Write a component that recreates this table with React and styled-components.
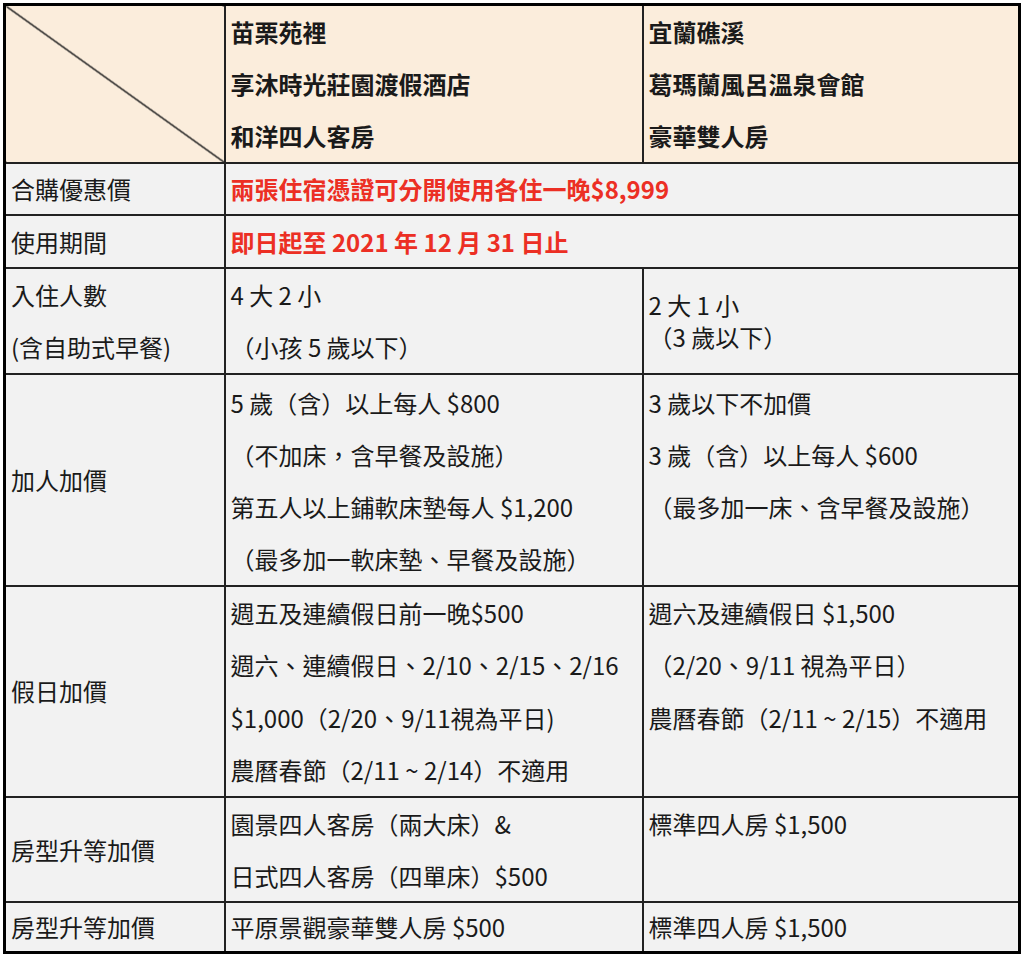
import React from 'react';
import styled, { createGlobalStyle } from 'styled-components';

const GlobalStyle = createGlobalStyle`
  body {
    margin: 0;
    background: #fff;
    font-family: "Noto Sans CJK TC", "Noto Sans", sans-serif;
  }
`;

const Page = styled.div`
  padding: 3px;
`;

const Table = styled.table`
  width: 1018px;
  table-layout: fixed;
  border-collapse: collapse;
  border: 3px solid #000;
  font-size: 24px;
  color: #1a1a1a;
`;

const Row = styled.tr`
  height: ${(p) => p.$h}px;
`;

const Cell = styled.td`
  border: 2px solid #222;
  padding: ${(p) => p.$pad || 0}px 4px 0 5px;
  vertical-align: ${(p) => (p.$top ? 'top' : 'middle')};
  background: ${(p) => (p.$head ? '#fbeddc' : '#f2f2f2')};
  font-weight: ${(p) => (p.$bold ? 700 : 400)};
  color: ${(p) => (p.$red ? '#ec2f24' : 'inherit')};
  line-height: ${(p) => p.$lh || 52}px;
  white-space: nowrap;
`;

const DiagonalCell = styled.td`
  border: 2px solid #222;
  padding: 0;
  background:
    linear-gradient(to top right, transparent calc(50% - 1px), #222 calc(50% - 0.5px), #222 calc(50% + 0.5px), transparent calc(50% + 1px)),
    #fbeddc;
`;

const Line = styled.div``;

const Lines = ({ items }) => items.map((t, i) => <Line key={i}>{t}</Line>);

const rows = [
  {
    h: 104,
    lh: 52,
    label: ['入住人數', '(含自助式早餐)'],
    a: ['4 大 2 小', '（小孩 5 歲以下）'],
    b: ['2 大 1 小', '（3 歲以下）'],
    bCenter: true,
  },
  {
    h: 210,
    pad: 2,
    label: ['加人加價'],
    a: ['5 歲（含）以上每人 $800', '（不加床，含早餐及設施）', '第五人以上鋪軟床墊每人 $1,200', '（最多加一軟床墊、早餐及設施）'],
    b: ['3 歲以下不加價', '3 歲（含）以上每人 $600', '（最多加一床、含早餐及設施）'],
  },
  {
    h: 208,
    lh: 52.25,
    label: ['假日加價'],
    a: ['週五及連續假日前一晚$500', '週六、連續假日、2/10、2/15、2/16', '$1,000（2/20、9/11視為平日)', '農曆春節（2/11 ~ 2/14）不適用'],
    b: ['週六及連續假日 $1,500', '（2/20、9/11 視為平日）', '農曆春節（2/11 ~ 2/15）不適用'],
  },
  {
    h: 103,
    lh: 51.5,
    label: ['房型升等加價'],
    a: ['園景四人客房（兩大床）&', '日式四人客房（四單床）$500'],
    b: ['標準四人房 $1,500'],
  },
  {
    h: 50,
    lh: 32,
    single: true,
    label: ['房型升等加價'],
    a: ['平原景觀豪華雙人房 $500'],
    b: ['標準四人房 $1,500'],
  },
];

export default function App() {
  return (
    <Page>
      <GlobalStyle />
      <Table>
        <colgroup>
          <col style={{ width: 220 }} />
          <col style={{ width: 418 }} />
          <col style={{ width: 377 }} />
        </colgroup>
        <tbody>
          <Row $h={158}>
            <DiagonalCell />
            <Cell $head $bold $top>
              <Lines items={['苗栗苑裡', '享沐時光莊園渡假酒店', '和洋四人客房']} />
            </Cell>
            <Cell $head $bold $top>
              <Lines items={['宜蘭礁溪', '葛瑪蘭風呂溫泉會館', '豪華雙人房']} />
            </Cell>
          </Row>
          <Row $h={52}>
            <Cell $lh={32}>合購優惠價</Cell>
            <Cell colSpan={2} $lh={32} $bold $red>兩張住宿憑證可分開使用各住一晚$8,999</Cell>
          </Row>
          <Row $h={53}>
            <Cell $lh={32}>使用期間</Cell>
            <Cell colSpan={2} $lh={32} $bold $red>即日起至 2021 年 12 月 31 日止</Cell>
          </Row>
          {rows.map((r, i) => (
            <Row key={i} $h={r.h}>
              <Cell $lh={r.lh}>
                <Lines items={r.label} />
              </Cell>
              <Cell $top={!r.single} $pad={r.pad} $lh={r.lh}>
                <Lines items={r.a} />
              </Cell>
              {r.bCenter ? (
                <Cell $lh={32}>
                  <Lines items={r.b} />
                </Cell>
              ) : (
                <Cell $top={!r.single} $pad={r.pad} $lh={r.lh}>
                  <Lines items={r.b} />
                </Cell>
              )}
            </Row>
          ))}
        </tbody>
      </Table>
    </Page>
  );
}
